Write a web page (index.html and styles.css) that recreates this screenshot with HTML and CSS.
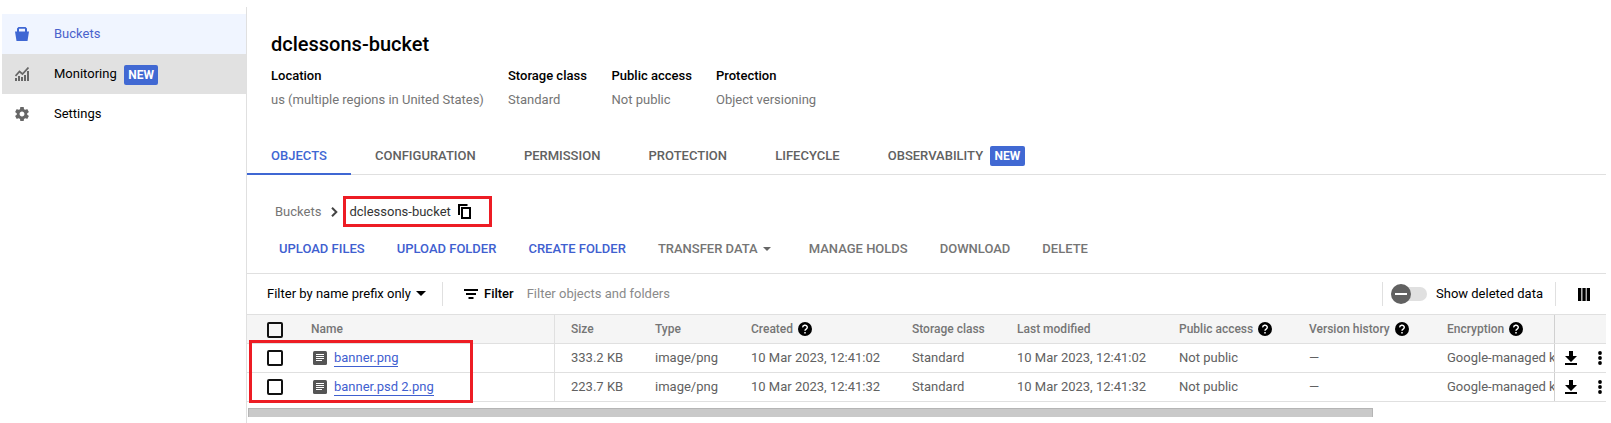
FILE: index.html
```
<!DOCTYPE html>
<html lang="en">
<head>
  <meta charset="utf-8">
  <title>dclessons-bucket</title>
  <link rel="stylesheet" href="styles.css">
</head>
<body>
  <svg class="sprite">
    <symbol id="help" viewBox="0 0 14 14">
      <circle cx="7" cy="7" r="7"/>
      <path d="M4.7 5.4a2.3 2.1 0 1 1 3.5 1.7c-.8.5-1.2.9-1.2 1.7M7 9.9v1.5" fill="none" stroke="#fff" stroke-width="1.5"/>
    </symbol>
    <symbol id="doc" viewBox="0 0 14 14">
      <rect width="14" height="14" rx="1.5" fill="#555"/>
      <path d="M3 3.5h8M3 5.500h8M3 7.500h8M3 9.500h6" stroke="#fff" stroke-width="1"/>
    </symbol>
    <symbol id="download" viewBox="0 0 12 14">
      <path d="M4 0h4v5h4L6 11 0 5h4zM0 12h12v2H0z"/>
    </symbol>
    <symbol id="more" viewBox="0 0 4 14">
      <circle cx="2" cy="2" r="1.9"/><circle cx="2" cy="7" r="1.9"/><circle cx="2" cy="12" r="1.9"/>
    </symbol>
  </svg>

  <div class="page">
    <nav class="sidebar">
      <a class="nav-item active">
        <svg class="nav-icon" viewBox="0 0 14 14"><path d="M3.500 0h7L12 1.500V4.500h2L12.500 14h-11L0 4.500h2V1.500zM4 1.800V4.500h6V1.800z" fill="#3f67d3" fill-rule="evenodd"/></svg>
        Buckets
      </a>
      <a class="nav-item hover">
        <svg class="nav-icon" viewBox="0 0 14 14"><path d="M1 14v-3M4 14V9M7 14v-4M10 14V8M13 14V4" stroke="#666" stroke-width="2"/><path d="M.5 9l4-4.500 3 2.500 6-6.500" fill="none" stroke="#666" stroke-width="1.700"/></svg>
        Monitoring <span class="badge">NEW</span>
      </a>
      <a class="nav-item">
        <svg class="nav-icon" viewBox="2 2 20 20"><path fill="#666" d="M19.430 12.980c.04-.32.070-.64.070-.98s-.03-.66-.07-.98l2.110-1.650c.19-.15.240-.42.120-.64l-2-3.460c-.12-.22-.39-.3-.61-.22l-2.490 1c-.52-.4-1.080-.73-1.690-.98l-.38-2.650C14.460 2.180 14.250 2 14 2h-4c-.25 0-.46.180-.49.420l-.38 2.650c-.61.250-1.170.590-1.690.98l-2.490-1c-.23-.09-.49 0-.61.220l-2 3.460c-.13.220-.07.490.120.640l2.110 1.650c-.04.320-.07.650-.07.980s.03.660.070.980l-2.110 1.650c-.19.150-.24.420-.12.640l2 3.460c.12.220.390.300.610.220l2.490-1c.52.400 1.080.730 1.690.980l.38 2.650c.03.240.240.420.490.420h4c.25 0 .46-.18.490-.42l.38-2.650c.61-.25 1.170-.59 1.690-.98l2.490 1c.23.090.490 0 .61-.22l2-3.460c.12-.22.070-.49-.12-.64l-2.110-1.650zM12 15.500c-1.930 0-3.500-1.570-3.500-3.500s1.570-3.500 3.500-3.500 3.500 1.570 3.500 3.500-1.570 3.500-3.500 3.500z"/></svg>
        Settings
      </a>
    </nav>

    <main class="content">
      <h1>dclessons-bucket</h1>
      <div class="details">
        <div class="location"><b>Location</b><span>us (multiple regions in United States)</span></div>
        <div class="storage"><b>Storage class</b><span>Standard</span></div>
        <div class="access"><b>Public access</b><span>Not public</span></div>
        <div><b>Protection</b><span>Object versioning</span></div>
      </div>

      <div class="tabs">
        <a class="tab selected">OBJECTS</a>
        <a class="tab">CONFIGURATION</a>
        <a class="tab">PERMISSION</a>
        <a class="tab">PROTECTION</a>
        <a class="tab">LIFECYCLE</a>
        <a class="tab">OBSERVABILITY <span class="badge">NEW</span></a>
      </div>

      <div class="breadcrumb">
        <span>Buckets</span>
        <svg class="chevron" viewBox="0 0 7 10"><path d="M1 .8L5.300 5 1 9.200" fill="none" stroke="#444" stroke-width="2"/></svg>
        <div class="current">
          dclessons-bucket
          <svg class="copy" viewBox="0 0 13 15"><path d="M1 11V1h8.500" fill="none" stroke="#000" stroke-width="2"/><path d="M4 4h8v10H4z" fill="none" stroke="#000" stroke-width="2"/></svg>
        </div>
      </div>

      <div class="actions">
        <a class="primary">UPLOAD FILES</a>
        <a class="primary">UPLOAD FOLDER</a>
        <a class="primary">CREATE FOLDER</a>
        <a class="transfer">TRANSFER DATA<i class="caret small"></i></a>
        <a>MANAGE HOLDS</a>
        <a>DOWNLOAD</a>
        <a>DELETE</a>
      </div>

      <div class="filter-bar">
        <span class="prefix">Filter by name prefix only<i class="caret"></i></span>
        <svg class="filter-icon" viewBox="0 0 14 10"><path d="M0 1h14M2 5h10M4.500 9h5" stroke="#000" stroke-width="2"/></svg>
        <b>Filter</b>
        <span class="placeholder">Filter objects and folders</span>
        <span class="deleted">
          <span class="toggle"><i></i></span>
          Show deleted data
        </span>
        <svg class="columns-icon" viewBox="0 0 12 13"><path d="M0 0h3.300v13H0zM4.400 0h3.300v13H4.400zM8.700 0H12v13H8.700z"/></svg>
      </div>

      <div class="table">
        <div class="row head">
          <div class="check"><i></i></div>
          <div class="name">Name</div>
          <div class="size">Size</div>
          <div>Type</div>
          <div>Created <svg class="help"><use href="#help"/></svg></div>
          <div>Storage class</div>
          <div>Last modified</div>
          <div>Public access <svg class="help"><use href="#help"/></svg></div>
          <div>Version history <svg class="help"><use href="#help"/></svg></div>
          <div>Encryption <svg class="help"><use href="#help"/></svg></div>
          <div class="tools"></div>
        </div>
        <div class="row">
          <div class="check"><i></i></div>
          <div class="name"><svg class="doc"><use href="#doc"/></svg><a>banner.png</a></div>
          <div class="size">333.2 KB</div>
          <div>image/png</div>
          <div>10 Mar 2023, 12:41:02</div>
          <div>Standard</div>
          <div>10 Mar 2023, 12:41:02</div>
          <div>Not public</div>
          <div>—</div>
          <div>Google-managed k</div>
          <div class="tools"><svg class="download"><use href="#download"/></svg><svg class="more"><use href="#more"/></svg></div>
        </div>
        <div class="row">
          <div class="check"><i></i></div>
          <div class="name"><svg class="doc"><use href="#doc"/></svg><a>banner.psd 2.png</a></div>
          <div class="size">223.7 KB</div>
          <div>image/png</div>
          <div>10 Mar 2023, 12:41:32</div>
          <div>Standard</div>
          <div>10 Mar 2023, 12:41:32</div>
          <div>Not public</div>
          <div>—</div>
          <div>Google-managed k</div>
          <div class="tools"><svg class="download"><use href="#download"/></svg><svg class="more"><use href="#more"/></svg></div>
        </div>
        <div class="highlight"></div>
      </div>
      <div class="scrollbar"></div>
    </main>
  </div>
</body>
</html>
```
FILE: styles.css
```
* {
  box-sizing: border-box;
}

body {
  margin: 0;
  height: 423px;
  background: #fff;
  font: 13px/20px Roboto, sans-serif;
  color: #212121;
  overflow: hidden;
}

b {
  font-weight: 500;
  color: #000;
}

svg {
  display: block;
  flex: none;
}

.sprite {
  display: none;
}

.page {
  display: flex;
  height: 423px;
  padding: 7px 5px 0 2px;
}

.sidebar {
  width: 245px;
  padding-top: 7px;
  border-right: 1px solid #e0e0e0;
}

.nav-item {
  display: flex;
  align-items: center;
  height: 40px;
  padding-left: 13px;
  color: #000;
}

.nav-item.active {
  background: #f0f5ff;
  color: #4a63cc;
}

.nav-item.hover {
  background: #e1e1e1;
}

.nav-icon {
  width: 14px;
  height: 14px;
  margin-right: 25px;
}

.badge {
  height: 20px;
  margin-left: 7px;
  padding: 0 4.5px;
  border-radius: 2px;
  background: #4169d3;
  color: #fff;
  font-weight: 700;
  font-size: 12px;
}

.nav-item .badge {
  position: relative;
  top: 1px;
}

.content {
  flex: 1;
  min-width: 0;
}

h1 {
  margin: 25px 0 0 24px;
  font-size: 20px;
  line-height: 24px;
  font-weight: 500;
  color: #000;
}

.details {
  display: flex;
  margin: 8px 0 0 24px;
}

.details b,
.details span {
  display: block;
  line-height: 24px;
}

.details span {
  color: #757575;
}

.location {
  width: 237px;
}

.storage {
  width: 103.5px;
}

.access {
  width: 104.5px;
}

.tabs {
  display: flex;
  height: 38px;
  margin-top: 25px;
  border-bottom: 1px solid #e0e0e0;
}

.tab {
  display: flex;
  align-items: center;
  height: 38px;
  padding: 0 24.1px;
  color: #616161;
  font-weight: 500;
}

.tab.selected {
  padding-top: 2px;
  border-bottom: 2px solid #3f67d3;
  color: #3f67d3;
}

.breadcrumb {
  display: flex;
  align-items: center;
  height: 31px;
  margin: 21px 0 0 28px;
  color: #757575;
}

.chevron {
  width: 7px;
  height: 10px;
  margin: 0 5px 0 10px;
}

.current {
  display: flex;
  align-items: center;
  width: 149px;
  height: 31px;
  padding-left: 3px;
  border: 3px solid #ed1c24;
  color: #333;
}

.copy {
  width: 13px;
  height: 15px;
  margin: -1px 0 0 7px;
}

.actions {
  display: flex;
  gap: 32px;
  height: 47px;
  padding: 12px 0 0 32px;
  border-bottom: 1px solid #e0e0e0;
  color: #757575;
  font-weight: 500;
}

.actions .primary {
  color: #3f60d0;
}

.transfer {
  margin-right: 6px;
}

.caret {
  display: inline-block;
  margin-left: 5px;
  border: 5px solid transparent;
  border-top-color: #000;
  border-bottom: 0;
  vertical-align: 2px;
}

.caret.small {
  border-width: 4px 4px 0;
  border-top-color: #666;
}

.filter-bar {
  display: flex;
  align-items: center;
  height: 40px;
  padding-left: 20px;
  color: #000;
}

.prefix {
  width: 176px;
  border-right: 1px solid #e0e0e0;
  line-height: 24px;
}

.filter-icon {
  width: 14px;
  height: 10px;
  margin: 0 6px 0 21px;
}

.placeholder {
  margin-left: 13px;
  color: #8a8a8a;
}

.deleted {
  display: flex;
  align-items: center;
  width: 174px;
  height: 24px;
  margin-left: auto;
  padding-left: 8px;
  border: solid #e0e0e0;
  border-width: 0 1px;
}

.toggle {
  width: 36px;
  height: 14px;
  margin-right: 9px;
  border-radius: 7px;
  background: #e0e0e0;
}

.toggle i {
  display: block;
  width: 20px;
  height: 20px;
  margin-top: -3px;
  border-radius: 50%;
  background: #616161 linear-gradient(#fff, #fff) center / 12px 2px no-repeat;
}

.columns-icon {
  width: 12px;
  height: 13px;
  margin: 0 16px 0 22px;
}

.table {
  position: relative;
  border-top: 1px solid #e0e0e0;
}

.row {
  display: grid;
  grid-template-columns: 64px 243px 101px 96px 161px 105px 162px 130px 138px 107px 52px;
  height: 29px;
  border-bottom: 1px solid #e0e0e0;
  line-height: 28px;
  color: #616161;
  white-space: nowrap;
}

.row div {
  display: flex;
  align-items: center;
  min-width: 0;
}

.row.head {
  background: #f5f5f5;
  color: #757575;
  font-weight: 500;
  font-size: 12px;
}

.check i {
  width: 16px;
  height: 16px;
  margin-left: 20px;
  border: 2px solid #111;
  border-radius: 2px;
}

.head .check i {
  margin-top: 2px;
}

.row .size {
  padding-left: 16px;
  border-left: 1px solid #e0e0e0;
}

.help {
  width: 14px;
  height: 14px;
  margin-left: 5px;
}

.doc {
  width: 14px;
  height: 14px;
  margin: 0 7px 0 2px;
}

.name a {
  border-bottom: 1px solid #3f60d0;
  color: #3f60d0;
  line-height: 16px;
}

.row .tools {
  padding-left: 10px;
  border-left: 1px solid #d0d0d0;
  background: #fff;
}

.row.head .tools {
  background: #f5f5f5;
}

.download {
  width: 12px;
  height: 14px;
}

.more {
  width: 4px;
  height: 14px;
  margin-left: 21px;
}

.highlight {
  position: absolute;
  left: 2px;
  top: 25px;
  width: 224px;
  height: 63px;
  border: 3px solid #ed1c24;
}

.scrollbar {
  width: 1125px;
  height: 9px;
  margin: 6px 0 0 1px;
  border: 1px solid #b5b5b5;
  border-bottom: 0;
  background: #c9c9c9;
}
```
